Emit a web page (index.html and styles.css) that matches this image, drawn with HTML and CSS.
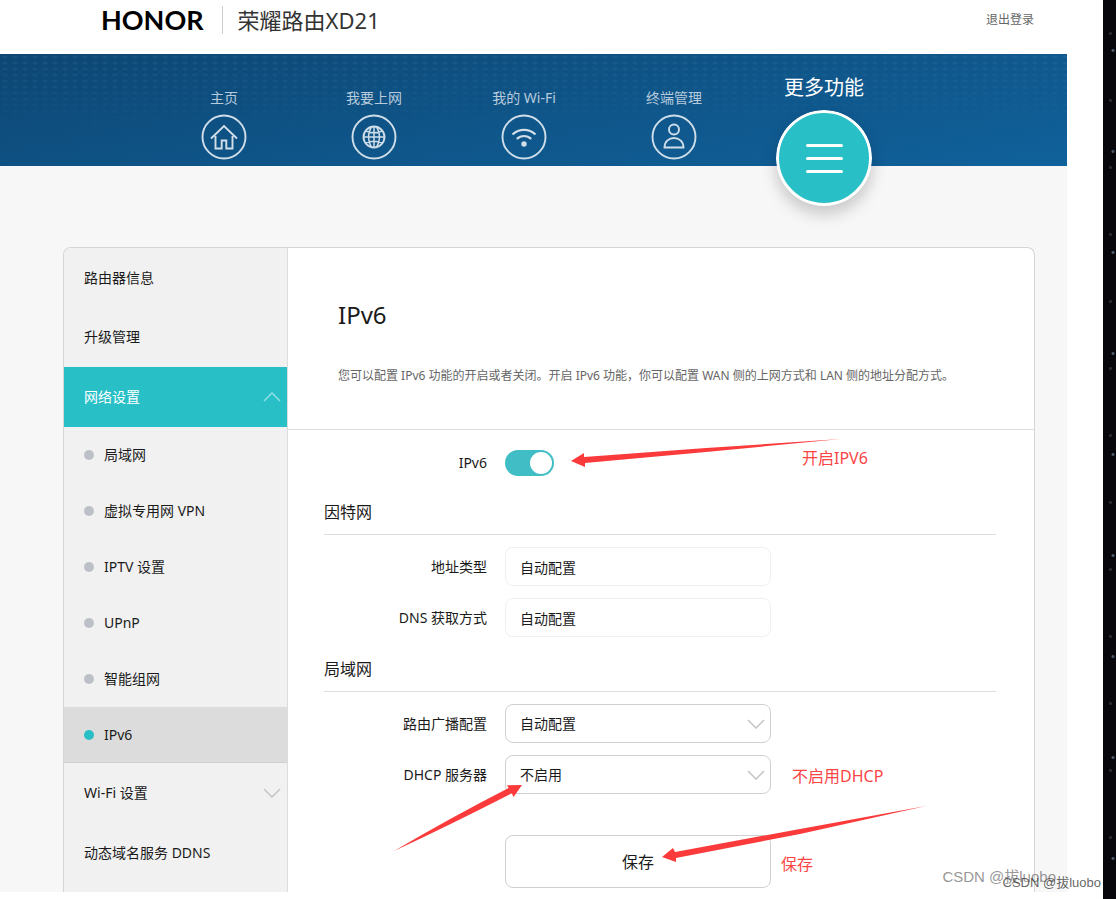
FILE: index.html
```html
<!DOCTYPE html>
<html lang="zh-CN">
<head>
<meta charset="utf-8">
<title>荣耀路由XD21</title>
<link rel="stylesheet" href="styles.css">
</head>
<body>
<div class="frame">
  <div class="app">
    <header class="topbar">
      <span class="logo">HONOR</span>
      <span class="model">荣耀路由XD21</span>
      <a class="logout" href="#">退出登录</a>
    </header>

    <nav class="nav">
      <a class="nav-item" href="#">
        <span>主页</span>
        <svg class="nav-icon" viewBox="0 0 46 46"><circle cx="23" cy="23" r="21.5"/><path d="M10 24.500 23 12 36 24.500M14.500 22v12.500h6.200v-8h4.600v8h6.200V22"/></svg>
      </a>
      <a class="nav-item" href="#">
        <span>我要上网</span>
        <svg class="nav-icon" viewBox="0 0 46 46"><circle cx="23" cy="23" r="21.500"/><circle cx="23" cy="23" r="10.500"/><path d="M12.500 23h21M23 12.500v21M20.500 12.800c-4 6-4 14.400 0 20.400M25.500 12.800c4 6 4 14.400 0 20.400M14.500 17c5 2 12 2 17 0M14.500 29c5-2 12-2 17 0" stroke-width="1.500"/></svg>
      </a>
      <a class="nav-item" href="#">
        <span>我的 Wi-Fi</span>
        <svg class="nav-icon" viewBox="0 0 46 46"><circle cx="23" cy="23" r="21.500"/><path d="M11.500 20.500c6.500-6.200 16.500-6.200 23 0M15.800 25c4.200-4 10.200-4 14.400 0" stroke-width="2.200"/><circle class="solid" cx="23" cy="30" r="2.700"/></svg>
      </a>
      <a class="nav-item" href="#">
        <span>终端管理</span>
        <svg class="nav-icon" viewBox="0 0 46 46"><circle cx="23" cy="23" r="21.500"/><circle cx="23" cy="15.500" r="5"/><path d="M13.500 33.500c0-12.600 19-12.600 19 0z"/></svg>
      </a>
      <a class="nav-item nav-current" href="#">
        <span>更多功能</span>
        <svg class="more-icon" viewBox="0 0 96 96"><circle cx="48" cy="48" r="46.500"/><path d="M31.500 35.500h34M31.500 48.500h34M31.500 61.500h34"/></svg>
      </a>
    </nav>

    <main class="stage">
      <div class="panel">
        <ul class="side">
          <li><a class="side-item first" href="#">路由器信息</a></li>
          <li><a class="side-item" href="#">升级管理</a></li>
          <li>
            <a class="side-item open" href="#">网络设置<svg class="chevron" viewBox="0 0 18 10"><path d="m1 9 8-8 8 8"/></svg></a>
            <ul class="sub">
              <li><a class="sub-item" href="#">局域网</a></li>
              <li><a class="sub-item" href="#">虚拟专用网 VPN</a></li>
              <li><a class="sub-item" href="#">IPTV 设置</a></li>
              <li><a class="sub-item" href="#">UPnP</a></li>
              <li><a class="sub-item" href="#">智能组网</a></li>
              <li><a class="sub-item selected" href="#">IPv6</a></li>
            </ul>
          </li>
          <li><a class="side-item" href="#">Wi-Fi 设置<svg class="chevron" viewBox="0 0 18 10"><path d="m1 1 8 8 8-8"/></svg></a></li>
          <li><a class="side-item" href="#">动态域名服务 DDNS</a></li>
        </ul>

        <section class="content">
          <div class="intro">
            <h1>IPv6</h1>
            <p>您可以配置 IPv6 功能的开启或者关闭。开启 IPv6 功能，你可以配置 WAN 侧的上网方式和 LAN 侧的地址分配方式。</p>
          </div>
          <form class="form">
            <div class="row">
              <label for="ipv6">IPv6</label>
              <input class="switch" id="ipv6" type="checkbox" checked>
            </div>

            <h2>因特网</h2>
            <div class="row">
              <label for="addr">地址类型</label>
              <input class="field" id="addr" type="text" value="自动配置" readonly>
            </div>
            <div class="row">
              <label for="dns">DNS 获取方式</label>
              <input class="field" id="dns" type="text" value="自动配置" readonly>
            </div>

            <h2>局域网</h2>
            <div class="row">
              <label for="ra">路由广播配置</label>
              <div class="select">
                <select class="field" id="ra"><option>自动配置</option></select>
                <svg class="chevron" viewBox="0 0 18 10"><path d="m1 1 8 8 8-8"/></svg>
              </div>
            </div>
            <div class="row">
              <label for="dhcp">DHCP 服务器</label>
              <div class="select">
                <select class="field" id="dhcp"><option>不启用</option></select>
                <svg class="chevron" viewBox="0 0 18 10"><path d="m1 1 8 8 8-8"/></svg>
              </div>
            </div>
            <div class="row actions">
              <button class="save" type="button">保存</button>
            </div>
          </form>
        </section>
      </div>
    </main>
  </div>
  <div class="space"></div>

  <svg class="arrows" width="1116" height="899" viewBox="0 0 1116 899">
    <path d="M571 461 584 453V457L706 448 841 439 706 452 585 463V467Z"/>
    <path d="M522 785 513.600 797 511.800 793.300Q450 825 394 851 450 818 508.600 788L507 785.300Z"/>
    <path d="M662 857 673 848 675 852 800 829 926 806 800 834 676 858V862Z"/>
  </svg>
  <span class="note note-switch">开启IPV6</span>
  <span class="note note-dhcp">不启用DHCP</span>
  <span class="note note-save">保存</span>
  <span class="mark mark-large">CSDN @拔luobo</span>
  <span class="mark mark-small">CSDN @拔luobo</span>
</div>
</body>
</html>
```
FILE: styles.css
```css
* { box-sizing: border-box; }

body, h1, h2, p, ul { margin: 0; padding: 0; }
ul { list-style: none; }
a { color: inherit; text-decoration: none; }

body {
  background: #fff;
  color: #1a1a1a;
  font: 14px/20px "Noto Sans", "Noto Sans CJK SC", sans-serif;
}

input, select, button { font: inherit; color: inherit; }

.frame {
  position: relative;
  display: grid;
  grid-template-columns: minmax(0, 1fr) 13px;
  column-gap: 36px;
  min-height: 100vh;
  overflow: hidden;
}

.app {
  display: flex;
  flex-direction: column;
  margin-bottom: 7px;
  background: #f7f7f7;
}

.space {
  background-color: #08070c;
  background-image:
    radial-gradient(circle, #4d5868 0 1px, transparent 2px),
    radial-gradient(circle, #2c2c34 0 1px, transparent 2px);
  background-size: 20px 101px, 15px 67px;
}

/* top bar */
.topbar {
  display: flex;
  align-items: center;
  height: 54px;
  padding: 0 33px 14px 101px;
  background: #fff;
}

.logo {
  padding-right: 18px;
  color: #000;
  font: 700 27px/28px Lato, sans-serif;
  border-right: 1px solid #ccc;
}

.model { margin-left: 15px; color: #333; font-size: 22px; }
.logout { margin-left: auto; color: #666; font-size: 12px; }

/* main navigation */
.nav {
  position: relative;
  z-index: 0;
  display: grid;
  grid-template-columns: repeat(5, 1fr);
  height: 112px;
  padding: 0 168px 0 149px;
  color: #b7cbdc;
  background: linear-gradient(170deg, #0d4673 0%, #0f568a 55%, #10619b 100%);
}

.nav::before {
  content: "";
  position: absolute;
  inset: 0;
  z-index: -1;
  background: radial-gradient(ellipse 4px 2px, rgba(70, 140, 190, .26), transparent) 0 0 / 10px 6px;
  mask-image: linear-gradient(#000, transparent 75%);
}

.nav-item {
  display: flex;
  flex-direction: column;
  align-items: center;
  gap: 6px;
  padding-top: 34px;
}

.nav-icon {
  width: 46px;
  height: 46px;
  fill: none;
  stroke: #cfdee9;
  stroke-width: 1.9;
}

.nav-icon .solid { fill: #cfdee9; stroke: none; }

.nav-current {
  gap: 12px;
  padding-top: 24px;
  color: #fff;
  font-size: 20px;
}

.more-icon {
  flex: none;
  width: 96px;
  height: 96px;
  border-radius: 50%;
  box-shadow: 0 8px 16px rgba(0, 0, 0, .2);
  fill: #29bfc7;
  stroke: #fff;
  stroke-width: 3;
  stroke-linecap: round;
}

/* settings panel */
.stage {
  display: flex;
  flex: 1;
  padding: 81px 32px 0 63px;
}

.panel {
  display: grid;
  grid-template-columns: 224px minmax(0, 1fr);
  flex: 1;
  border: 1px solid #d5d5d5;
  border-bottom: 0;
  border-radius: 8px 8px 0 0;
  background: #fff;
  overflow: hidden;
}

.side { background: #f1f1f1; border-right: 1px solid #ddd; }

.side-item {
  display: flex;
  align-items: center;
  justify-content: space-between;
  height: 60px;
  padding: 0 6px 0 20px;
}

.side-item.first { height: 59px; }

.chevron {
  width: 18px;
  height: 10px;
  fill: none;
  stroke: #c4c4c4;
  stroke-width: 1.5;
}

.open { background: #29bfc7; color: #fff; }
.open .chevron { stroke: #8fe0e4; }

.sub-item {
  display: flex;
  align-items: center;
  gap: 10px;
  height: 56px;
  padding-left: 20px;
}

.sub-item::before {
  content: "";
  width: 10px;
  height: 10px;
  border-radius: 50%;
  background: #bcc0c8;
}

.selected { background: #dcdcdc; border-bottom: 1px solid #d0d0d0; }
.selected::before { background: #29bfc7; }

.intro {
  padding: 49px 50px 43px;
  border-bottom: 1px solid #ddd;
}

h1 { font-size: 24px; line-height: 36px; font-weight: 400; }
.intro p { margin-top: 33px; color: #666; font-size: 12px; }

.form { padding: 20px 38px 4px 36px; }

h2 {
  margin: 20px 0 12px;
  padding-bottom: 10px;
  border-bottom: 1px solid #ddd;
  font-size: 16px;
  line-height: 24px;
  font-weight: 400;
}

.row {
  display: grid;
  grid-template-columns: 163px 266px;
  column-gap: 18px;
  align-items: center;
}

.row:first-child { margin-bottom: 24px; }
.row + .row { margin-top: 12px; }
.row label { text-align: right; }

.switch {
  display: flex;
  justify-content: flex-end;
  align-items: center;
  appearance: none;
  width: 49px;
  height: 26px;
  margin: 0;
  padding: 2px;
  border-radius: 13px;
  background: #40bdc5;
}

.switch::before {
  content: "";
  width: 22px;
  height: 22px;
  border-radius: 50%;
  background: #fff;
}

.field {
  display: block;
  width: 100%;
  height: 39px;
  padding: 0 14px;
  border: 1px solid #f0f0f0;
  border-radius: 8px;
  background: #fff;
}

.select { position: relative; }
.select .field { appearance: none; border-color: #d0d0d0; }
.select .chevron { position: absolute; top: 15px; right: 6px; pointer-events: none; }

.row.actions { margin-top: 41px; }

.save {
  grid-column: 2;
  height: 53px;
  border: 1px solid #d0d0d0;
  border-radius: 8px;
  background: #fff;
  font-size: 16px;
}

/* annotations lying over the page */
.arrows { position: absolute; top: 0; left: 0; fill: #fb3b3b; pointer-events: none; }

.note { position: absolute; color: #fb4545; font-size: 16px; line-height: 24px; }
.note-switch { left: 802px; top: 446px; }
.note-dhcp { left: 792px; top: 764px; }
.note-save { left: 781px; top: 852px; }

.mark {
  position: absolute;
  color: rgba(90, 90, 90, .65);
  font-family: "Liberation Sans", "Noto Sans CJK SC", sans-serif;
}
.mark-large { right: 60px; bottom: 12px; font-size: 15px; }
.mark-small { right: 15px; bottom: 6px; color: rgba(60, 60, 60, .8); font-size: 13px; }
```
